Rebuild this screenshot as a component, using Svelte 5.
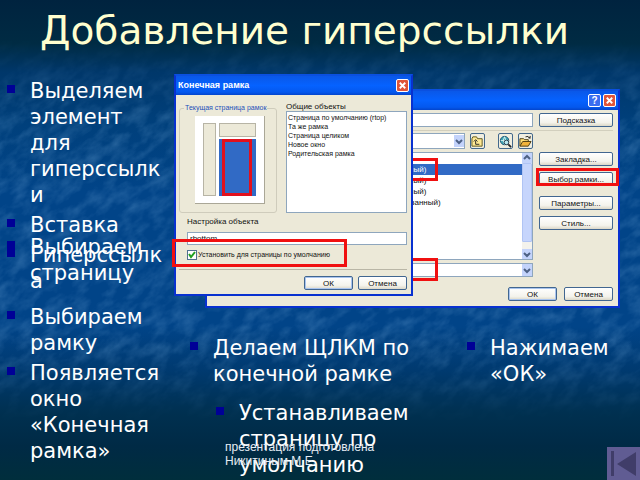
<script>
  const objects = [
    'Страница по умолчанию (rtop)',
    'Та же рамка',
    'Страница целиком',
    'Новое окно',
    'Родительская рамка'
  ];
  const files = ['', 'Фон (полный)', 'Фон (полный)', 'Фон (полный)', 'Лист (связанный)'];
  let selected = $state(1);
  let useDefault = $state(true);
</script>

<div class="slide">
  <svg class="texture" aria-hidden="true" preserveAspectRatio="none">
    <filter id="rock" x="0" y="0" width="100%" height="100%">
      <feTurbulence type="fractalNoise" baseFrequency="0.05 0.09" numOctaves="5" seed="8" />
      <feColorMatrix values="0 0 0 0 0.25  0 0 0 0 0.5  0 0 0 0 0.8  1.6 0 0 0 -0.6" />
    </filter>
    <g transform="rotate(-35)">
      <rect x="-60%" y="-20%" width="180%" height="240%" filter="url(#rock)" />
    </g>
  </svg>

  <header><h1>Добавление гиперссылки</h1></header>

  <div class="content">
    <aside>
      <div class="stack">
        <ul>
          <li>Выделяем элемент для гиперссылки</li>
          <li>Вставка</li>
          <li>Гиперссылка</li>
        </ul>
        <ul class="over"><li>Выбираем страницу</li></ul>
      </div>
      <ul>
        <li>Выбираем рамку</li>
        <li>Появляется окно «Конечная рамка»</li>
      </ul>
    </aside>

    <main>
      <div class="desktop">
        <section class="window link" aria-label="Гиперссылка">
          <div class="bar">
            <span></span>
            <button class="cap help" aria-label="Справка">?</button>
            <button class="cap close" aria-label="Закрыть">
              <svg viewBox="0 0 12 12"><path d="M3 3L9 9M9 3L3 9" /></svg>
            </button>
          </div>
          <div class="panel">
            <div class="row">
              <input class="grow" type="text" aria-label="Текст" />
              <button class="btn wide">Подсказка</button>
            </div>
            <div class="rule"></div>
            <div class="row files">
              <div class="browse">
                <div class="tools">
                  <select class="look" aria-label="Папка"><option></option></select>
                  <button class="tool" aria-label="На уровень вверх">
                    <svg viewBox="0 0 14 14"><path d="M1 4L2 2H6L7 4H12V12H1Z" fill="#ffe994" stroke="#5a5218" /><path d="M5 10H9M5 10V6M3 7L5 5L7 7" fill="none" stroke="#222" /></svg>
                  </button>
                  <button class="tool gap" aria-label="Интернет">
                    <svg viewBox="0 0 14 14"><circle cx="6" cy="6" r="4.5" fill="#42a8b8" stroke="#18506e" /><path d="M2 6H10M6 2Q3 6 6 10M6 2Q9 6 6 10" fill="none" stroke="#d8f4f0" /><circle cx="8" cy="8" r="2.5" fill="#b8e8f0" stroke="#234" /><path d="M10 10L13 13" stroke="#222" stroke-width="2" /></svg>
                  </button>
                  <button class="tool" aria-label="Открыть">
                    <svg viewBox="0 0 14 14"><path d="M1 12V4H5L6 5H10V7" fill="#ffe07a" stroke="#4a3a10" /><path d="M1 12L4 7H13L10 12Z" fill="#f2b43c" stroke="#4a3a10" /><path d="M7 2Q10 0 12 4M10 3H12V1" fill="none" stroke="#222" /></svg>
                  </button>
                </div>
                <div class="list">
                  <ul class="plain">
                    {#each files as f, i}
                      <li class:selected={i === selected}>{f}</li>
                    {/each}
                  </ul>
                  <div class="scroll">
                    <i><svg viewBox="0 0 8 8"><path d="M1 5L4 2L7 5" /></svg></i>
                    <b></b>
                    <i><svg viewBox="0 0 8 8"><path d="M1 3L4 6L7 3" /></svg></i>
                  </div>
                </div>
                <select class="addr" aria-label="Адрес"><option></option></select>
              </div>
              <div class="side">
                <button class="btn">Закладка...</button>
                <button class="btn">Выбор рамки...</button>
                <button class="btn low">Параметры...</button>
                <button class="btn">Стиль...</button>
              </div>
            </div>
            <div class="row actions">
              <button class="btn main">ОК</button>
              <button class="btn">Отмена</button>
            </div>
          </div>
          <span class="mark m-item"></span>
          <span class="mark m-addr"></span>
          <span class="mark m-frame"></span>
        </section>

        <section class="window target" aria-label="Конечная рамка">
          <div class="bar">
            <span>Конечная рамка</span>
            <button class="cap close" aria-label="Закрыть">
              <svg viewBox="0 0 12 12"><path d="M3 3L9 9M9 3L3 9" /></svg>
            </button>
          </div>
          <div class="panel">
            <div class="row top">
              <fieldset>
                <legend>Текущая страница рамок</legend>
                <div class="page">
                  <div class="f-left"></div>
                  <div class="f-right">
                    <div class="f-top"></div>
                    <div class="f-main"><span></span></div>
                  </div>
                </div>
              </fieldset>
              <div class="common">
                <span>Общие объекты</span>
                <ul class="plain box">
                  {#each objects as o}<li>{o}</li>{/each}
                </ul>
              </div>
            </div>
            <label class="name" for="object">Настройка объекта</label>
            <input id="object" class="object" type="text" value="rbottom" />
            <label class="check">
              <input type="checkbox" bind:checked={useDefault} />Установить для страницы по умолчанию
            </label>
            <div class="rule"></div>
            <div class="row actions">
              <button class="btn main">ОК</button>
              <button class="btn">Отмена</button>
            </div>
          </div>
          <span class="mark m-check"></span>
        </section>
      </div>

      <div class="notes">
        <ul>
          <li>Делаем ЩЛКМ по конечной рамке</li>
          <li class="inset">Устанавливаем страницу по умолчанию</li>
        </ul>
        <ul><li>Нажимаем «ОК»</li></ul>
      </div>
    </main>
  </div>

  <footer>презентация подготовлена Никитиным М.Е.</footer>
  <button class="back" aria-label="В начало">
    <svg viewBox="0 0 33 33"><path d="M4 4H7V29H4ZM29 5V29L10 17Z" fill="#403d69" /></svg>
  </button>
</div>

<style>
  :global(body) { margin: 0; background: #002b43; }
  * { box-sizing: border-box; }
  .slide {
    position: relative;
    min-height: 100vh;
    overflow: hidden;
    color: #fff;
    font-family: "DejaVu Sans", sans-serif;
    background: linear-gradient(#00233f 0%, #002b43 9%, #00376a 15%, #00407c 26%, #014488 40%, #014488 68%, #003a70 77%, #003050 86%, #002a45 93%, #002e3c 100%);
  }
  .texture {
    position: absolute;
    inset: 0;
    width: 100%;
    height: 100%;
    opacity: 0.3;
    mask-image: linear-gradient(transparent 8%, #000 25%, #000 72%, transparent 88%);
  }
  header { position: relative; height: 74px; padding-left: 40px; }
  h1 {
    margin: 0;
    color: #ffffcf;
    font: 400 39px/62px "DejaVu Sans", sans-serif;
    white-space: nowrap;
  }
  .content { position: relative; display: flex; }
  aside { flex: none; width: 174px; padding: 4px 10px 0 7px; }
  main { flex: 1; min-width: 0; }
  ul { margin: 0; padding: 0; list-style: none; }
  .slide ul:not(.plain) { display: flex; flex-direction: column; gap: 4px; }
  .slide ul:not(.plain) > li {
    position: relative;
    padding-left: 23px;
    font-size: 21px;
    line-height: 26px;
    overflow-wrap: anywhere;
  }
  .slide ul:not(.plain) > li::before {
    content: "";
    position: absolute;
    left: 0;
    top: 7px;
    width: 8px;
    height: 8px;
    background: #000096;
  }
  .stack { display: grid; margin-bottom: 10px; }
  .stack > ul { grid-area: 1 / 1; }
  .stack > .over { align-self: end; margin-bottom: 8px; }

  .desktop { position: relative; height: 233px; }
  .window {
    position: absolute;
    border: 2px solid #0831d0;
    border-top-color: #0a50e0;
    background: #ece9d8;
    color: #111;
    font: 8px/10px "Liberation Sans", Arial, sans-serif;
  }
  .window.link { left: 31px; top: 15px; width: 415px; height: 219px; }
  .window.target { left: 0; top: 0; width: 239px; height: 222px; }
  .bar {
    display: flex;
    align-items: center;
    gap: 2px;
    height: 19px;
    padding: 0 2px 0 2px;
    background: linear-gradient(#0a58e8, #0562ff 50%, #0458ee 85%, #0345cc);
    color: #fff;
    font: 700 9px/19px "Liberation Sans", sans-serif;
  }
  .bar span { flex: 1; }
  .cap {
    width: 13px;
    height: 13px;
    padding: 0;
    border: 1px solid #fff;
    border-radius: 2px;
    background: #3a6df0;
    color: #fff;
    font: 700 10px/11px "Liberation Sans", sans-serif;
  }
  .cap.close { background: #e0553a; }
  .cap svg { display: block; width: 11px; height: 11px; }
  .cap path { stroke: #fff; stroke-width: 2; }
  .row { display: flex; gap: 6px; }
  .rule { height: 1px; background: #b9b6a6; border-bottom: 0; }
  input[type="text"], select, .list, .box {
    border: 1px solid #8ea6bd;
    border-radius: 0;
    background: #fff;
    color: #111;
    font: inherit;
    padding: 0 2px;
  }
  .btn {
    height: 14px;
    padding: 0;
    border: 1px solid #416690;
    border-radius: 2px;
    background: linear-gradient(#fff, #f4f3ec 70%, #dcd8c8);
    color: #111;
    font: inherit;
    line-height: 11px;
    white-space: nowrap;
  }
  .btn.main { box-shadow: inset 0 0 0 1px #a9c4ee; }
  .actions { justify-content: flex-end; }
  .actions .btn { width: 49px; }

  .link .panel { padding: 3px 5px 0 6px; }
  .link .actions { gap: 7px; margin-top: 10px; }
  .grow { flex: 1; height: 14px; min-width: 0; }
  .wide { width: 74px; }
  .link .rule { margin: 3px 0 2px; background: #d2cfbe; }
  .browse { flex: 1; min-width: 0; }
  .tools { display: flex; gap: 5px; height: 16px; }
  select {
    appearance: none;
    display: block;
    background: #fff url("data:image/svg+xml,%3Csvg xmlns='http://www.w3.org/2000/svg' width='10' height='12'%3E%3Crect width='10' height='12' fill='%23c3d3fb'/%3E%3Cpath d='M2 5L5 8L8 5' fill='none' stroke='%234d6185' stroke-width='2'/%3E%3C/svg%3E") right center no-repeat;
  }
  .look { flex: 1; height: 16px; }
  .tool {
    width: 15px;
    height: 16px;
    padding: 0;
    border: 1px solid #43688c;
    border-radius: 2px;
    background: #f0eee0;
  }
  .tool.gap { margin-left: 8px; }
  .tool svg { display: block; width: 13px; height: 13px; }
  .list { display: flex; height: 108px; margin: 3px 0; padding: 0; }
  .list ul { flex: 1; }
  .list li { height: 11px; padding-left: 162px; line-height: 11px; white-space: nowrap; }
  .list li.selected { background: #316ac5; color: #fff; }
  .scroll { display: flex; flex-direction: column; width: 10px; background: #f3f2ec; }
  .scroll b { height: 79px; border: 1px solid #b0c4f4; border-radius: 1px; background: #c6d5fc; }
  .scroll i { height: 10px; background: #c3d3fb; }
  .scroll i:last-child { margin-top: auto; }
  .scroll svg { display: block; width: 8px; height: 10px; margin: 0 auto; }
  .scroll path { fill: none; stroke: #4d6185; stroke-width: 2; }
  .addr { width: 100%; height: 14px; }
  .side { display: flex; flex-direction: column; gap: 6px; width: 74px; padding-top: 19px; }
  .side .low { margin-top: 4px; }

  .target .panel { padding: 8px 4px 0 3px; }
  .top { gap: 9px; height: 110px; }
  fieldset {
    width: 98px;
    min-width: 0;
    margin: 0;
    padding: 3px 8px 7px 15px;
    border: 1px solid #cfccbc;
    border-radius: 3px;
  }
  legend { margin-left: -11px; padding: 0 1px; color: #1d50b8; white-space: nowrap; font-size: 7px; line-height: 10px; }
  .page {
    display: flex;
    gap: 3px;
    width: 70px;
    height: 88px;
    padding: 7px 8px;
    border: solid #aaa797;
    border-width: 0 1px 1px 0;
    background: #fff;
  }
  .f-left, .f-top { background: #ece9d8; border: 1px solid #b7b4a5; }
  .f-left { width: 13px; }
  .f-right { flex: 1; display: flex; flex-direction: column; gap: 2px; }
  .f-top { height: 14px; }
  .f-main { flex: 1; padding: 0 4px 0 3px; background: #316ac5; }
  .f-main span { display: block; height: 100%; border: 3px solid #e2101c; }
  .common { flex: 1; min-width: 0; margin-top: -1px; }
  .common span { display: block; line-height: 9px; }
  .box { height: 102px; padding: 1px; font-size: 7px; line-height: 9px; }
  .box li { white-space: nowrap; }
  .name { display: block; margin: 4px 0 5px 8px; }
  .object { display: block; width: calc(100% - 8px); height: 13px; margin-left: 8px; }
  .check { display: flex; align-items: center; height: 11px; margin: 4px 0 0 8px; font-size: 7px; white-space: nowrap; }
  .check input {
    appearance: none;
    flex: none;
    width: 10px;
    height: 10px;
    margin: 0 1px 0 0;
    border: 1px solid #50708f;
    background: #fff;
  }
  .check input:checked {
    background: #fff url("data:image/svg+xml,%3Csvg xmlns='http://www.w3.org/2000/svg' width='8' height='8'%3E%3Cpath d='M1 3L3 6L7 1' fill='none' stroke='%2321a121' stroke-width='2'/%3E%3C/svg%3E");
  }
  .target .rule { margin: 9px 0 6px; }
  .target .actions { gap: 5px; }

  .mark { position: absolute; border: 3px solid #f01010; pointer-events: none; }
  .m-item { right: 180px; top: 67px; width: 90px; height: 23px; }
  .m-addr { right: 180px; top: 167px; width: 90px; height: 23px; }
  .m-frame { right: -1px; top: 77px; width: 83px; height: 18px; }
  .m-check { left: -4px; top: 163px; width: 175px; height: 28px; }

  .notes { display: flex; gap: 8px; padding: 28px 0 0 16px; }
  .notes > ul:first-child { flex: none; width: 269px; }
  .slide .notes > ul { gap: 13px; }
  .notes li { max-width: 236px; }
  .notes .inset { margin-left: 26px; max-width: 204px; }
  .notes > ul:last-child { flex: 1; min-width: 0; }

  footer {
    position: absolute;
    left: 225px;
    bottom: 12px;
    width: 180px;
    color: #e6edf4;
    font: 12px/14px "Liberation Sans", Arial, sans-serif;
  }
  .back {
    position: absolute;
    right: 0;
    bottom: 0;
    width: 33px;
    height: 33px;
    padding: 0;
    border: 0;
    background: #605c93;
  }
  .back svg { display: block; }
</style>
